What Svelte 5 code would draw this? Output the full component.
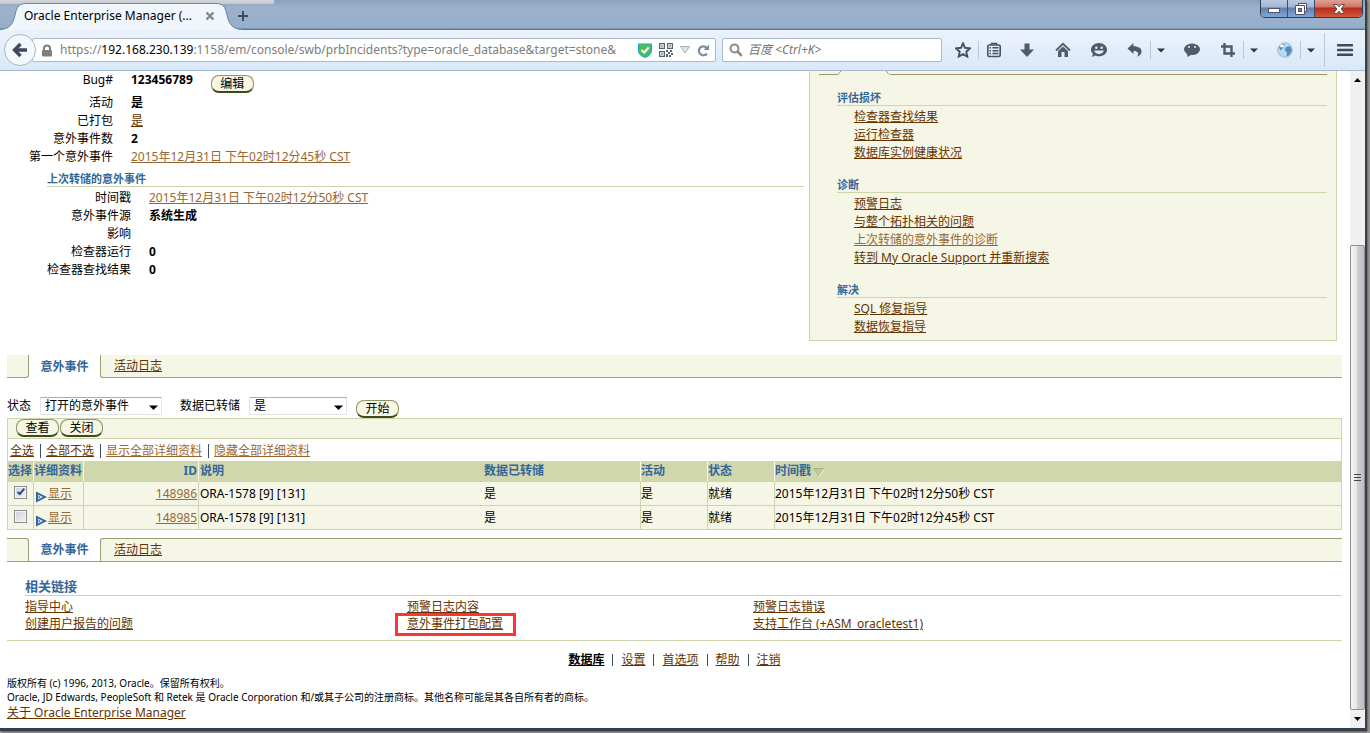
<script>
	const facts = [
		{ label: "活动", value: "是" },
		{ label: "已打包", value: "是", link: true },
		{ label: "意外事件数", value: "2" },
		{ label: "第一个意外事件", value: "2015年12月31日 下午02时12分45秒 CST", link: true, visited: true },
	];

	const lastDump = [
		{ label: "时间戳", value: "2015年12月31日 下午02时12分50秒 CST", link: true, visited: true },
		{ label: "意外事件源", value: "系统生成" },
		{ label: "影响", value: "" },
		{ label: "检查器运行", value: "0" },
		{ label: "检查器查找结果", value: "0" },
	];

	const groups = [
		{
			title: "评估损坏",
			links: [{ text: "检查器查找结果" }, { text: "运行检查器" }, { text: "数据库实例健康状况" }],
		},
		{
			title: "诊断",
			links: [
				{ text: "预警日志" },
				{ text: "与整个拓扑相关的问题" },
				{ text: "上次转储的意外事件的诊断", visited: true },
				{ text: "转到 My Oracle Support 并重新搜索" },
			],
		},
		{
			title: "解决",
			links: [{ text: "SQL 修复指导" }, { text: "数据恢复指导" }],
		},
	];

	let incidents = [
		{ checked: true, id: 148986, desc: "ORA-1578 [9] [131]", dumped: "是", active: "是", status: "就绪", time: "2015年12月31日 下午02时12分50秒 CST" },
		{ checked: false, id: 148985, desc: "ORA-1578 [9] [131]", dumped: "是", active: "是", status: "就绪", time: "2015年12月31日 下午02时12分45秒 CST" },
	];

	const related = ["指导中心", "预警日志内容", "预警日志错误", "创建用户报告的问题", "意外事件打包配置", "支持工作台 (+ASM_oracletest1)"];

	const footerLinks = ["数据库", "设置", "首选项", "帮助", "注销"];

	let search = "";

	const selectAll = (checked) => {
		incidents = incidents.map((row) => ({ ...row, checked }));
	};
</script>

<div class="window">
	<header>
		<div class="titlebar">
			<div class="tab">
				<svg class="tab-shape" viewBox="0 0 242 30" preserveAspectRatio="none" aria-hidden="true">
					<path d="M0 29.5C9 29 13 25 15 15C17 6 19 3.500 27 3.500H215C223 3.500 225 6 227 15C229 25 233 29 242 29.500V30H0Z" fill="#f1f5fc" />
					<path d="M0 29.500C9 29 13 25 15 15C17 6 19 3.500 27 3.500H215C223 3.500 225 6 227 15C229 25 233 29 242 29.500" fill="none" stroke="#6b86a5" />
				</svg>
				<span class="tab-title">Oracle Enterprise Manager (...</span>
				<button class="plain" aria-label="关闭标签页">
					<svg width="10" height="10" viewBox="0 0 10 10"><path d="M1.500 1.500L8.500 8.500M8.500 1.500L1.500 8.500" stroke="#7d8794" stroke-width="2.400" /></svg>
				</button>
			</div>
			<button class="plain new-tab" aria-label="新建标签页">
				<svg width="12" height="12" viewBox="0 0 12 12"><path d="M6 1V11M1 6H11" stroke="#3d4b5c" stroke-width="2" /></svg>
			</button>
			<div class="controls">
				<button aria-label="最小化">
					<svg width="14" height="8" viewBox="0 0 14 8"><rect x="1.500" y="3.500" width="11" height="4" fill="#fff" stroke="#4d5468" /></svg>
				</button>
				<button aria-label="还原">
					<svg width="14" height="13" viewBox="0 0 14 13"><path d="M4.500 1.500H12.500V9.500H4.500Z" fill="#fff" stroke="#4d5468" /><path d="M1.500 3.500H10.500V12.500H1.500Z" fill="#fff" stroke="#4d5468" /><rect x="4.500" y="6.500" width="3" height="3" fill="#6e8bb6" stroke="#4d5468" /></svg>
				</button>
				<button class="close" aria-label="关闭">
					<svg width="14" height="12" viewBox="0 0 14 12"><path d="M1.500 1.500H5L7 3.800L9 1.500H12.500L9.200 6L12.500 10.500H9L7 8.200L5 10.500H1.500L4.800 6Z" fill="#fff" stroke="#584a55" /></svg>
				</button>
			</div>
		</div>

		<div class="toolbar">
			<button class="back" aria-label="后退">
				<svg width="16" height="16" viewBox="0 0 16 16"><path d="M8.500 2L2.500 8L8.500 14M3 8H15" fill="none" stroke="#3f4b58" stroke-width="3.400" /></svg>
			</button>
			<div class="urlbar">
				<svg width="12" height="13" viewBox="0 0 12 13"><path d="M3 6V4.500A3 3 0 0 1 9 4.500V6" fill="none" stroke="#7f7f7f" stroke-width="2" /><rect x="1" y="6" width="10" height="6.500" rx="1" fill="#7f7f7f" /></svg>
				<span class="url">https://<b>192.168.230.139</b>:1158/em/console/swb/prbIncidents?type=oracle_database&amp;target=stone&amp;</span>
				<svg width="14" height="15" viewBox="0 0 14 15"><path d="M0 0.500H14V8C14 11 10 14 7 15C4 14 0 11 0 8Z" fill="#22a9c4" /><path d="M1.500 1.500H12.500V8C12.500 10.500 9.500 12.800 7 13.800C4.500 12.800 1.500 10.500 1.500 8Z" fill="#4cc04c" /><path d="M3.500 7L6.200 9.500L10.700 4.500" fill="none" stroke="#fff" stroke-width="2" /></svg>
				<svg width="14" height="14" viewBox="0 0 14 14" fill="#57636f"><path fill-rule="evenodd" d="M0 0H6V6H0ZM1.200 1.200V4.800H4.800V1.200ZM8 0H14V6H8ZM9.200 1.200V4.800H12.800V1.200ZM0 8H6V14H0ZM1.200 9.200V12.800H4.800V9.200Z" /><path d="M2.300 2.300H3.700V3.700H2.300ZM10.300 2.300H11.700V3.700H10.300ZM2.300 10.300H3.700V11.700H2.300ZM7 7H9V9H7ZM11 7H13V9H11ZM9 9H11V11H9ZM7 11H9V14H7ZM12 10H14V12H12ZM10 12H12V14H10Z" /></svg>
				<svg width="10" height="8" viewBox="0 0 10 8"><path d="M0.500 0.500H9.500L5 7Z" fill="#dfe3e8" stroke="#a7adb5" /></svg>
				<svg width="13" height="13" viewBox="0 0 13 13"><path d="M10 9.500A4.500 4.500 0 1 1 9.500 3.500" fill="none" stroke="#7d8b9c" stroke-width="2.200" /><path d="M12 0.500V6H6.500Z" fill="#7d8b9c" /></svg>
			</div>
			<div class="searchbar">
				<svg width="14" height="14" viewBox="0 0 14 14"><circle cx="5.500" cy="5.500" r="4" fill="none" stroke="#8a8a8a" stroke-width="2" /><path d="M8.500 8.500L12.800 12.800" stroke="#8a8a8a" stroke-width="2.600" /></svg>
				<input type="text" aria-label="搜索" placeholder="百度 <Ctrl+K>" bind:value={search} />
			</div>
			<div class="icons">
				<button class="plain star" aria-label="收藏"><svg viewBox="0 0 16 16"><path d="M8 1.300L10 5.800L15 6.300L11.300 9.700L12.300 14.600L8 12.100L3.700 14.600L4.700 9.700L1 6.300L6 5.800Z" fill="none" stroke="#46535f" stroke-width="1.900" /></svg></button>
				<i class="sep"></i>
				<button class="plain star" aria-label="书签"><svg viewBox="0 0 16 16"><path d="M5.500 3V1.500H10.500V3" fill="none" stroke="#46535f" stroke-width="1.500" /><rect x="1.800" y="3" width="12.400" height="11.500" rx="1.500" fill="none" stroke="#46535f" stroke-width="1.600" /><path d="M3.500 5.800H5M6.500 5.800H12.500M3.500 8.700H5M6.500 8.700H12.500M3.500 11.600H5M6.500 11.600H12.500" stroke="#46535f" stroke-width="1.500" /></svg></button>
				<button class="plain" aria-label="下载"><svg viewBox="0 0 16 16"><path d="M5.500 1.500H10.500V7.500H15L8 15L1 7.500H5.500Z" fill="#4f5c68" /></svg></button>
				<button class="plain" aria-label="主页"><svg viewBox="0 0 16 16"><path d="M1 8.500L8 1.800L15 8.500" fill="none" stroke="#4f5c68" stroke-width="1.800" /><path d="M3 9L8 4.500L13 9V15H9.500V10H6.500V15H3Z" fill="#4f5c68" /></svg></button>
				<button class="plain" aria-label="聊天"><svg viewBox="0 0 16 16"><path d="M8 1C12.500 1 16 4 16 7.700C16 11.500 12.500 14.300 8 14.300C6.500 14.300 5.500 14 4.500 13.600L0.800 15L2 11.900C0.700 10.700 0 9.300 0 7.700C0 4 3.500 1 8 1Z" fill="#4f5c68" /><circle cx="5.300" cy="5.800" r="1.200" fill="#e6eefa" /><circle cx="10.700" cy="5.800" r="1.200" fill="#e6eefa" /><path d="M3.200 8.500H12.800C12 13 4 13 3.200 8.500Z" fill="#e6eefa" /></svg></button>
				<button class="plain paired" aria-label="撤销"><svg viewBox="0 0 16 16"><path d="M0.500 6.500L6.500 1V4.300C11.500 4.300 15 6.500 14.500 10C14.200 12.500 12.500 14 9.800 14.800C12.500 11.500 11 8.800 6.500 8.900V12Z" fill="#4f5c68" /></svg></button>
				<i class="sep"></i>
				<button class="plain drop" aria-label="更多撤销"><svg viewBox="0 0 8 5"><path d="M0 0.500H8L4 4.500Z" fill="#2f3942" /></svg></button>
				<button class="plain" aria-label="消息"><svg viewBox="0 0 16 16"><ellipse cx="8" cy="7.300" rx="8" ry="5.800" fill="#4f5c68" /><path d="M3 10.500L3.500 15L8.500 12Z" fill="#4f5c68" /><circle cx="5" cy="5" r="1" fill="#e6eefa" /><circle cx="11" cy="5" r="1" fill="#e6eefa" /></svg></button>
				<button class="plain paired" aria-label="截图"><svg viewBox="0 0 16 16"><path d="M1 4.500H11.500V15M4.500 1V11.500H15" fill="none" stroke="#4f5c68" stroke-width="2.400" /></svg></button>
				<i class="sep"></i>
				<button class="plain drop" aria-label="截图选项"><svg viewBox="0 0 8 5"><path d="M0 0.500H8L4 4.500Z" fill="#2f3942" /></svg></button>
				<button class="plain paired" aria-label="代理"><svg viewBox="0 0 16 16"><circle cx="8" cy="8" r="7.300" fill="#bcd8ee" stroke="#a3b9cc" /><path d="M2 5.500C3.500 2.500 6 1.500 8 2L6.500 5.500L3.500 8.500ZM9 5L13 4L15 8L12.500 13L9.500 14.500L10 10.500L7.500 8Z" fill="#4d8fc2" /><ellipse cx="5" cy="4" rx="2" ry="1.400" fill="#fff" /></svg></button>
				<i class="sep"></i>
				<button class="plain drop" aria-label="代理选项"><svg viewBox="0 0 8 5"><path d="M0 0.500H8L4 4.500Z" fill="#2f3942" /></svg></button>
				<i class="sep tall"></i>
				<button class="plain menu" aria-label="菜单"><svg viewBox="0 0 16 16"><path d="M1 3.200H15M1 8H15M1 12.800H15" stroke="#3f4b58" stroke-width="2.600" stroke-linecap="round" /></svg></button>
			</div>
		</div>
	</header>

	<div class="viewport">
		<main>
			<div class="top">
				<section class="details">
					<dl>
						<div class="bug">
							<dt>Bug#</dt>
							<dd>123456789</dd>
							<button class="pill">编辑</button>
						</div>
						{#each facts as fact}
							<div>
								<dt>{fact.label}</dt>
								<dd>
									{#if fact.link}<a href="#top" class:visited={fact.visited}>{fact.value}</a>{:else}{fact.value}{/if}
								</dd>
							</div>
						{/each}
					</dl>
					<h3>上次转储的意外事件</h3>
					<dl class="inner">
						{#each lastDump as fact}
							<div>
								<dt>{fact.label}</dt>
								<dd>
									{#if fact.link}<a href="#top" class:visited={fact.visited}>{fact.value}</a>{:else}{fact.value}{/if}
								</dd>
							</div>
						{/each}
					</dl>
				</section>

				<aside>
					<div class="aside-tabs">
						<i></i>
						<svg width="52" height="4" viewBox="0 0 52 4"><path d="M0 3.500L3 0M48 0L51 3.500" fill="none" stroke="#999966" /></svg>
						<i class="rest"></i>
					</div>
					{#each groups as group}
						<h3>{group.title}</h3>
						<ul>
							{#each group.links as link}
								<li><a href="#top" class:visited={link.visited}>{link.text}</a></li>
							{/each}
						</ul>
					{/each}
				</aside>
			</div>

			<nav class="tabs">
				<span class="edge"></span>
				<b>意外事件</b>
				<span class="others"><a href="#log">活动日志</a></span>
			</nav>

			<form class="filter" on:submit|preventDefault>
				<label for="status">状态</label>
				<div class="select status">
					<select id="status"><option>打开的意外事件</option><option>全部</option></select>
					<svg width="9" height="5" viewBox="0 0 9 5"><path d="M0 0.500H9L4.500 5Z" /></svg>
				</div>
				<label for="dumped">数据已转储</label>
				<div class="select dumped">
					<select id="dumped"><option>是</option><option>否</option></select>
					<svg width="9" height="5" viewBox="0 0 9 5"><path d="M0 0.500H9L4.500 5Z" /></svg>
				</div>
				<button class="pill">开始</button>
			</form>

			<div class="grid">
				<div class="actions">
					<button class="pill">查看</button>
					<button class="pill">关闭</button>
				</div>
				<div class="bulk">
					<a href="#all" on:click|preventDefault={() => selectAll(true)}>全选</a>
					<i></i>
					<a href="#none" on:click|preventDefault={() => selectAll(false)}>全部不选</a>
					<i></i>
					<a href="#show" class="visited">显示全部详细资料</a>
					<i></i>
					<a href="#hide" class="visited">隐藏全部详细资料</a>
				</div>
				<table>
					<colgroup>
						<col class="c-pick" /><col class="c-more" /><col class="c-id" /><col class="c-desc" /><col class="c-dump" /><col class="c-state" /><col class="c-state" /><col />
					</colgroup>
					<thead>
						<tr>
							<th>选择</th>
							<th>详细资料</th>
							<th class="num">ID</th>
							<th class="open">说明</th>
							<th>数据已转储</th>
							<th>活动</th>
							<th>状态</th>
							<th>时间戳<svg width="12" height="10" viewBox="0 0 12 10"><path d="M1 1.500H11L6 9Z" fill="#c2c79c" stroke="#b0b686" /><path d="M11.500 1.500L6 9.500" stroke="#f7f7e7" /></svg></th>
						</tr>
					</thead>
					<tbody>
						{#each incidents as row}
							<tr>
								<td><input type="checkbox" aria-label="选择 {row.id}" bind:checked={row.checked} /></td>
								<td>
									<div class="more">
										<svg width="12" height="12" viewBox="0 0 12 12"><path d="M1 0.500L12 6L1 11.500Z" fill="#336699" /><path d="M3 3.500L8 6L3 8.500Z" fill="#d5e8f7" /><path d="M4.200 4.800V7.200" stroke="#336699" /></svg>
										<a href="#row" class="visited">显示</a>
									</div>
								</td>
								<td class="num"><a href="#row" class="visited">{row.id}</a></td>
								<td class="open">{row.desc}</td>
								<td>{row.dumped}</td>
								<td>{row.active}</td>
								<td>{row.status}</td>
								<td>{row.time}</td>
							</tr>
						{/each}
					</tbody>
				</table>
			</div>

			<nav class="tabs bottom">
				<span class="edge"></span>
				<b>意外事件</b>
				<span class="others"><a href="#log">活动日志</a></span>
			</nav>

			<section class="related">
				<h2>相关链接</h2>
				<div class="links">
					{#each related as text, i}
						<span class:marked={i === 4}><a href="#related">{text}</a></span>
					{/each}
				</div>
			</section>

			<footer>
				<nav>
					{#each footerLinks as text, i}
						{#if i > 0}<i></i>{/if}
						<a href="#footer" class:current={i === 0}>{text}</a>
					{/each}
				</nav>
				<p>版权所有 (c) 1996, 2013, Oracle。保留所有权利。</p>
				<p>Oracle, JD Edwards, PeopleSoft 和 Retek 是 Oracle Corporation 和/或其子公司的注册商标。其他名称可能是其各自所有者的商标。</p>
				<a href="#about">关于 Oracle Enterprise Manager</a>
			</footer>
		</main>

		<div class="scrollbar">
			<svg width="7" height="4" viewBox="0 0 7 4"><path d="M3.500 0L7 4H0Z" /></svg>
			<div class="thumb"><i></i><i></i><i></i></div>
			<svg width="7" height="4" viewBox="0 0 7 4"><path d="M0 0H7L3.500 4Z" /></svg>
		</div>
	</div>
</div>

<style>
	:global(body) {
		margin: 0;
		background: #a5a5a5;
	}

	.window {
		box-sizing: border-box;
		display: flex;
		flex-direction: column;
		min-height: calc(100vh - 2px);
		border-right: 2px solid #3c3f42;
		border-bottom: 3px solid #33404c;
		margin-right: 3px;
		margin-bottom: 2px;
		box-shadow: 1px 1px 3px #555;
		background: #fff;
		font-family: "Noto Sans", "Noto Sans CJK SC", sans-serif;
		font-size: 12px;
		line-height: 18px;
		color: #000;
	}

	button,
	input,
	select {
		font: inherit;
		margin: 0;
	}

	svg {
		display: block;
		flex: none;
	}

	.plain {
		display: flex;
		align-items: center;
		justify-content: center;
		padding: 0;
		border: 0;
		background: none;
	}

	/* browser chrome */
	.titlebar {
		display: flex;
		align-items: flex-start;
		height: 30px;
		background:
			linear-gradient(#d4d6d9, #c3c7cc) 0 0 / 274px 4px no-repeat,
			linear-gradient(#8aa3bd 0, #9fb1cb 8px, #94afcc 28px, #5f7995 29px);
	}

	.tab {
		position: relative;
		display: flex;
		align-items: center;
		box-sizing: border-box;
		width: 242px;
		height: 30px;
		padding: 2px 27px 0 24px;
	}

	.tab-shape {
		position: absolute;
		inset: 0;
		width: 100%;
		height: 100%;
	}

	.tab-title {
		position: relative;
		flex: 1;
		white-space: nowrap;
	}

	.tab .plain {
		position: relative;
	}

	.new-tab {
		padding: 10px 0 0;
		margin-left: -5px;
	}

	.controls {
		display: flex;
		margin-left: auto;
		margin-right: 2px;
		border: 1px solid #2d3c55;
		border-top: 0;
		border-radius: 0 0 5px 5px;
		overflow: hidden;
	}

	.controls button {
		display: flex;
		align-items: center;
		justify-content: center;
		width: 27px;
		height: 17px;
		padding: 0;
		border: 0;
		border-right: 1px solid #3d4e6c;
		background: linear-gradient(#bccadf 0, #a3b5d1 7px, #5f7fae 8px, #86a7d2);
	}

	.controls .close {
		width: 47px;
		border-right: 0;
		background: linear-gradient(#e0a095 0, #cf7364 7px, #b92b16 8px, #d5593f);
	}

	.toolbar {
		display: flex;
		align-items: center;
		height: 40px;
		padding-left: 4px;
		border-bottom: 1px solid #a3b8d3;
		background: linear-gradient(#ecf2fb, #d9e8f8);
	}

	.back {
		position: relative;
		display: flex;
		align-items: center;
		justify-content: center;
		width: 32px;
		height: 32px;
		padding: 0;
		border: 1px solid #a6b6ca;
		border-radius: 50%;
		background: #f5f9fe;
	}

	.urlbar,
	.searchbar {
		box-sizing: border-box;
		display: flex;
		align-items: center;
		height: 24px;
		border: 1px solid #aabbd0;
		border-radius: 2px;
		background: #fff;
	}

	.urlbar {
		flex: 1;
		min-width: 0;
		gap: 7px;
		margin-left: -4px;
		padding: 0 5px 0 8px;
	}

	.url {
		flex: 1;
		overflow: hidden;
		white-space: nowrap;
		color: #7d7d7d;
	}

	.url b {
		font-weight: normal;
		color: #000;
	}

	.searchbar {
		width: 220px;
		margin-left: 6px;
		padding: 0 6px;
		gap: 5px;
	}

	.searchbar input {
		min-width: 0;
		flex: 1;
		padding: 0;
		border: 0;
		outline: 0;
		background: none;
	}

	.searchbar input::placeholder {
		font-style: italic;
		color: #757575;
	}

	.icons {
		display: flex;
		align-items: center;
		margin-left: 6px;
	}

	.icons .plain {
		width: 36px;
		height: 24px;
	}

	.icons .star {
		width: 30px;
	}

	.icons .paired {
		width: 33px;
		padding-left: 3px;
	}

	.icons .drop {
		width: 19px;
		margin-right: 4px;
	}

	.icons .menu {
		width: 40px;
	}

	.icons svg {
		width: 16px;
		height: 16px;
	}

	.icons .drop svg {
		width: 8px;
		height: 5px;
	}

	.sep {
		width: 1px;
		height: 18px;
		background: #b9c7d8;
	}

	.sep.tall {
		height: 34px;
	}

	/* page */
	.viewport {
		flex: 1;
		display: flex;
	}

	main {
		flex: 1;
		padding: 0 8px 4px 7px;
	}

	a {
		color: #663300;
	}

	a.visited {
		color: #996633;
	}

	dl,
	dd,
	ul,
	p,
	h2,
	h3 {
		margin: 0;
		padding: 0;
	}

	li {
		list-style: none;
	}

	.top {
		display: flex;
		gap: 5px;
	}

	.details {
		flex: 1;
	}

	dl > div {
		display: flex;
		gap: 18px;
		min-height: 18px;
	}

	dl > .bug {
		height: 23px;
	}

	dt {
		width: 106px;
		text-align: right;
	}

	.inner dt {
		width: 124px;
	}

	dd {
		font-weight: bold;
	}

	dd a {
		font-weight: normal;
	}

	h3 {
		box-sizing: border-box;
		height: 31px;
		padding-top: 14px;
		margin-bottom: 2px;
		border-bottom: 1px solid #cfd5ab;
		font-size: 11px;
		line-height: 18px;
		color: #336699;
	}

	.details h3 {
		height: 21px;
		padding-top: 4px;
		margin-left: 40px;
	}

	.pill {
		box-sizing: border-box;
		width: 43px;
		height: 18px;
		padding: 0;
		border: 1px solid #8c9468;
		border-bottom: 2px solid #3c4a1c;
		border-radius: 8px;
		background: #f6f6e2;
		line-height: 15px;
		color: #000;
	}

	.bug .pill {
		margin-top: 4px;
	}

	aside {
		box-sizing: border-box;
		width: 528px;
		margin-right: 5px;
		padding: 0 9px 4px 27px;
		border: 1px solid #cfd5ab;
		border-top: 0;
		background: #f6f6e6;
	}

	aside li {
		padding-left: 17px;
	}

	.aside-tabs {
		display: flex;
		align-items: flex-end;
		height: 4px;
		margin-left: -18px;
	}

	.aside-tabs i {
		width: 19px;
		height: 1px;
		background: #999966;
	}

	.aside-tabs .rest {
		flex: 1;
	}

	.tabs {
		display: flex;
		height: 23px;
		margin-top: 14px;
		line-height: 22px;
	}

	.tabs b {
		box-sizing: border-box;
		width: 71px;
		text-align: center;
		line-height: 24px;
		color: #336699;
	}

	.edge,
	.others {
		box-sizing: border-box;
		border-bottom: 1px solid #999f73;
		background: #f6f6e6;
	}

	.edge {
		width: 22px;
		border-right: 1px solid #999f73;
		border-bottom-right-radius: 3px;
	}

	.others {
		flex: 1;
		padding-left: 13px;
		border-left: 1px solid #999f73;
		border-bottom-left-radius: 3px;
	}

	.tabs.bottom {
		height: 24px;
		margin-top: 8px;
	}

	.bottom b {
		border-bottom: 1px solid #999f73;
	}

	.bottom .edge,
	.bottom .others {
		border-top: 1px solid #999f73;
		border-radius: 0;
	}

	.bottom .edge {
		border-top-right-radius: 3px;
	}

	.bottom .others {
		border-top-left-radius: 3px;
	}

	.filter {
		display: flex;
		align-items: center;
		height: 22px;
		margin-top: 18px;
	}

	.filter label,
	.select {
		margin-bottom: 2px;
	}

	.select {
		position: relative;
		margin-left: 9px;
		margin-right: 18px;
	}

	.select svg {
		position: absolute;
		right: 4px;
		top: 8px;
		pointer-events: none;
	}

	select {
		display: block;
		appearance: none;
		width: 100%;
		height: 18px;
		padding: 0 4px;
		border: 1px solid #e3e3ee;
		border-top-color: #abadb3;
		border-radius: 1px;
		background: #fff;
		line-height: 16px;
		color: #000;
	}

	.status {
		width: 122px;
	}

	.select.dumped {
		width: 98px;
		margin-right: 9px;
	}

	.filter .pill {
		align-self: flex-end;
	}

	.grid {
		border: 1px solid #cfd5ab;
		border-bottom: 0;
	}

	.actions {
		display: flex;
		gap: 1px;
		height: 19px;
		padding-left: 8px;
		border-bottom: 1px solid #cfd5ab;
		background: #f6f6e6;
	}

	.bulk {
		display: flex;
		align-items: center;
		height: 22px;
		padding: 2px 0 0 2px;
		box-sizing: border-box;
	}

	.bulk i {
		width: 1px;
		height: 14px;
		margin: 0 5px;
		border-right: 1px solid #33506e;
	}

	table {
		width: 100%;
		table-layout: fixed;
		border-collapse: separate;
		border-spacing: 0;
	}

	.c-pick {
		width: 26px;
	}

	.c-more {
		width: 50px;
	}

	.c-id {
		width: 115px;
	}

	.c-desc {
		width: 285px;
	}

	.c-dump {
		width: 157px;
	}

	.c-state {
		width: 67px;
	}

	th,
	td {
		box-sizing: border-box;
		padding: 0;
		border-right: 1px solid #cfd5ab;
		text-align: left;
		white-space: nowrap;
	}

	th {
		height: 21px;
		border-right-color: #f7f7e7;
		border-bottom: 1px solid #cfd5ab;
		background: #d0d7ad;
		color: #336699;
	}

	td {
		height: 24px;
		border-bottom: 1px solid #cfd5ab;
		background: #f6f6e6;
	}

	th:last-child,
	td:last-child,
	.open {
		border-right: 0;
	}

	.open {
		padding-left: 1px;
	}

	th svg {
		display: inline-block;
		vertical-align: -2px;
		margin-left: 2px;
	}

	.num {
		padding-right: 1px;
		text-align: right;
	}

	td input {
		position: relative;
		display: block;
		box-sizing: border-box;
		appearance: none;
		width: 13px;
		height: 13px;
		margin: 0 auto 3px;
		border: 1px solid #8e8f8f;
		background: linear-gradient(135deg, #cbcfd5, #f6f6f6);
		box-shadow: inset 0 0 0 1px #f4f4f4;
	}

	td input:checked::after {
		content: "";
		position: absolute;
		left: 4px;
		top: 0;
		width: 2px;
		height: 6px;
		border: solid #31479e;
		border-width: 0 2px 2px 0;
		transform: rotate(40deg);
	}

	.more {
		display: flex;
		align-items: flex-end;
		gap: 1px;
		padding-left: 1px;
	}

	.related {
		padding-bottom: 8px;
		border-bottom: 1px solid #cfd5ab;
	}

	.related h2 {
		margin: 15px 0 2px 18px;
		border-bottom: 1px solid #cfd5ab;
		font-size: 13px;
		line-height: 18px;
		color: #336699;
	}

	.links {
		display: grid;
		grid-template-columns: 382fr 346fr 589fr;
		padding-left: 18px;
		line-height: 17px;
	}

	.marked {
		position: relative;
	}

	.marked::after {
		content: "";
		position: absolute;
		left: -12px;
		top: -2px;
		width: 115px;
		height: 17px;
		border: 3px solid #fb3434;
		pointer-events: none;
	}

	footer nav {
		display: flex;
		align-items: center;
		justify-content: center;
		height: 18px;
		margin: 10px 0 7px;
	}

	footer nav i {
		width: 1px;
		height: 12px;
		margin: 0 8px;
		background: #33506e;
	}

	footer .current {
		font-weight: bold;
		color: #000;
	}

	footer p {
		font-size: 10px;
		line-height: 14px;
	}

	.scrollbar {
		display: flex;
		flex-direction: column;
		align-items: center;
		width: 15px;
		padding: 7px 0 7px;
		background: #f0f0f2;
	}

	.thumb {
		flex: 1;
		box-sizing: border-box;
		display: flex;
		flex-direction: column;
		align-items: center;
		justify-content: center;
		gap: 2px;
		width: 15px;
		margin: 163px 0 7px;
		border: 1px solid #8f9094;
		border-radius: 2px;
		background: linear-gradient(90deg, #f5f5f6, #e6e6e9 45%, #cfcfd4 50%, #bcbcc3);
	}

	.thumb i {
		width: 7px;
		height: 1px;
		background: #44474d;
	}
</style>
